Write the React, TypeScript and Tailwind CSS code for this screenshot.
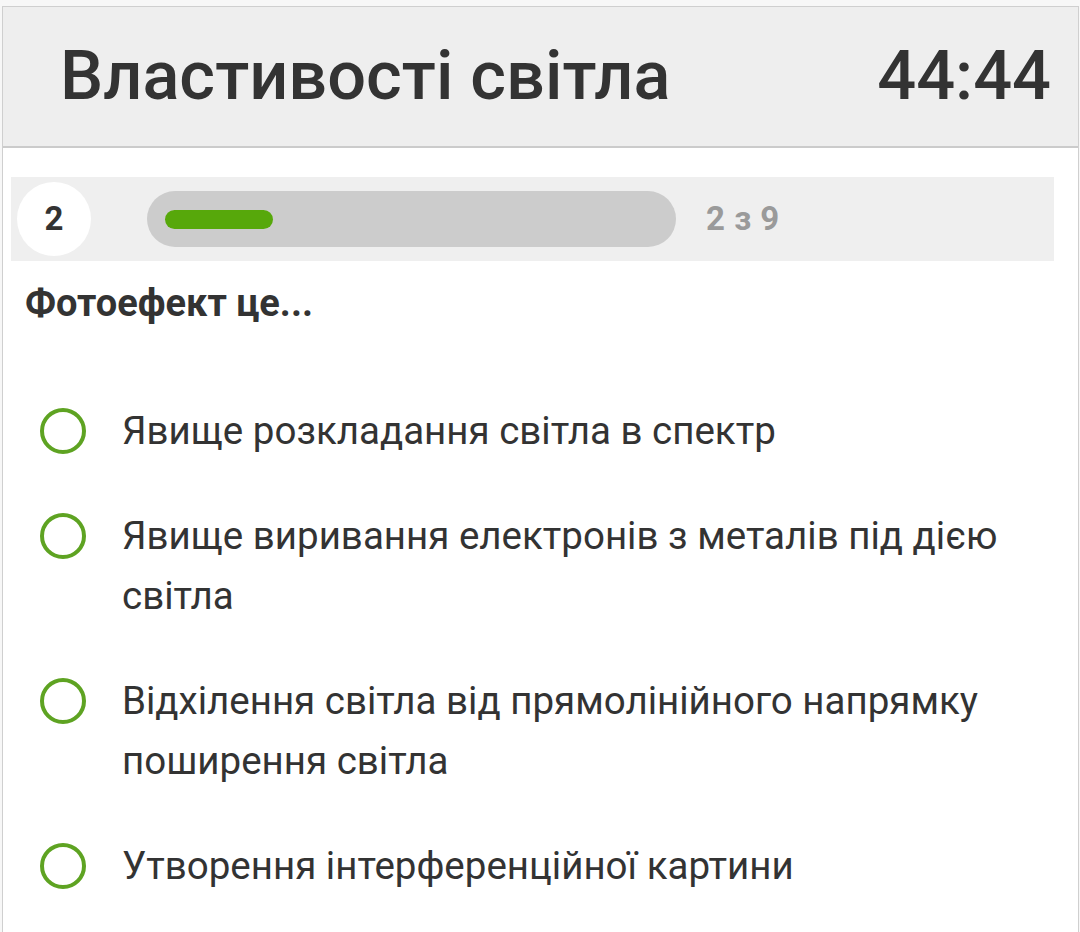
import React from "react";

const options = [
  "Явище розкладання світла в спектр",
  "Явище виривання електронів з металів під дією світла",
  "Відхілення світла від прямолінійного напрямку поширення світла",
  "Утворення інтерференційної картини",
];

export default function App() {
  return (
    <div
      className="h-[932px] w-[1080px] overflow-hidden bg-[#f7f7f7] pt-[6px]"
      style={{ fontFamily: "Roboto, 'Noto Sans', sans-serif" }}
    >
      <div className="ml-[2px] mr-[1px] h-full border-l border-r border-t border-[#cfcfcf] bg-white">
        <div className="flex h-[141px] items-center justify-between border-b-2 border-[#cbcbcb] bg-[#eeeeee] pl-[57px] pr-[27px]">
          <h1 className="text-[68.5px] font-medium leading-none text-[#333333]">Властивості світла</h1>
          <div className="text-[68.5px] font-medium leading-none text-[#333333]">44:44</div>
        </div>

        <div className="ml-[8px] mr-[24px] mt-[29px] flex h-[84px] items-center bg-[#efefef]">
          <div className="ml-[6px] flex h-[74px] w-[74px] items-center justify-center rounded-full bg-white text-[33px] font-bold text-[#333333]">
            2
          </div>
          <div className="ml-[56px] flex h-[56px] w-[529px] items-center rounded-full bg-[#cccccc] px-[18px]">
            <div className="h-[19px] w-[108px] rounded-full bg-[#57a80b]" />
          </div>
          <div className="ml-[30px] text-[33px] font-bold tracking-[0.5px] text-[#9a9a9a]">2 з 9</div>
        </div>

        <div className="ml-[22px] mt-[22px] text-[38px] font-bold leading-[40px] text-[#333333]">Фотоефект це...</div>

        <div className="mt-[78px] flex flex-col gap-[45px] pl-[37px] pr-[40px]">
          {options.map((o) => (
            <div key={o} className="flex items-start">
              <div className="mt-[7px] h-[46px] w-[46px] shrink-0 rounded-full border-[4px] border-[#5ea322]" />
              <div className="ml-[36px] text-[38.5px] leading-[60px] text-[#333333]">{o}</div>
            </div>
          ))}
        </div>
      </div>
    </div>
  );
}
